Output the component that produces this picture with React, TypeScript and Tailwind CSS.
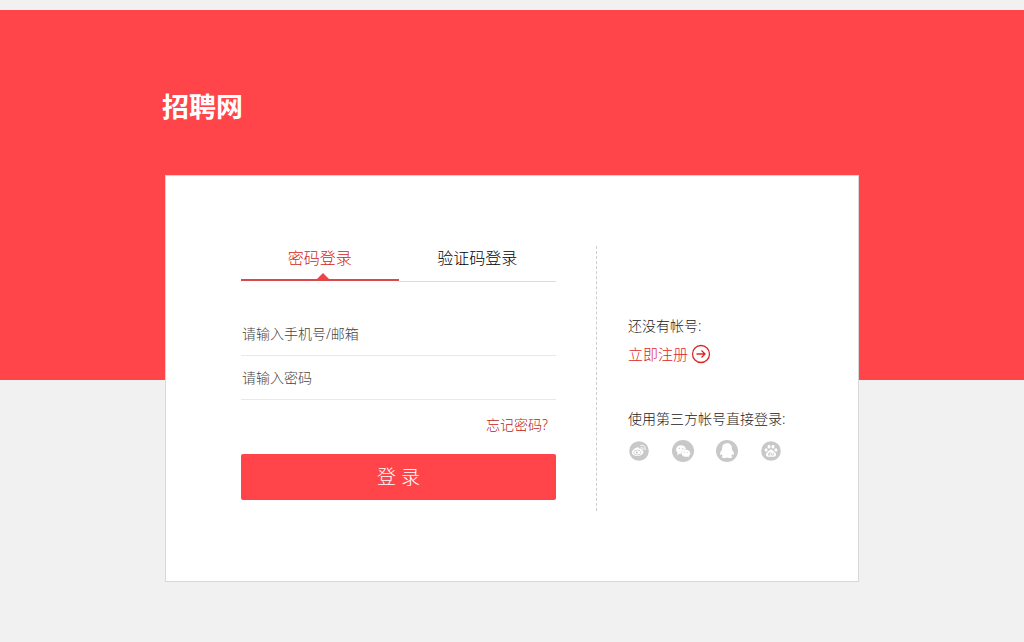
import { useState } from "react";
import type { ReactNode } from "react";

const tabs = ["密码登录", "验证码登录"];

function ArrowCircleIcon() {
  return (
    <svg viewBox="0 0 20 20" className="size-5" fill="none" stroke="currentColor" strokeWidth="1.3" aria-hidden="true">
      <circle cx="10" cy="10" r="8.5" />
      <path d="M5.5 10h8.5M10.5 6.5l3.5 3.5-3.5 3.5" />
    </svg>
  );
}

function WeiboIcon() {
  return (
    <svg viewBox="0 0 22 22" className="size-[22px]" aria-hidden="true">
      <circle cx="11" cy="11" r="9.8" fill="#c8c8c8" />
      <path
        fill="#fff"
        d="M9.2 7.4c1.300-.5 2 .2 1.700 1.400 1.600-.6 3.200-.5 2.900 1.200 1.400.5 2 1.600 1.400 3-.9 2-3.400 3-6 3-3 0-5.300-1.500-5.300-3.700 0-2 2.600-4.200 5.300-4.900z"
      />
      <ellipse cx="9.300" cy="12.500" rx="3.500" ry="2.400" fill="none" stroke="#c8c8c8" strokeWidth=".8" />
      <circle cx="8.900" cy="12.600" r="1" fill="#c8c8c8" />
      <path
        d="M12.800 5.400c2.800-.6 5 1.500 4.300 4.400M13.200 7.500c1.300-.2 2.200.7 1.900 2"
        fill="none"
        stroke="#fff"
        strokeWidth="1"
        strokeLinecap="round"
      />
    </svg>
  );
}

function WechatIcon() {
  return (
    <svg viewBox="0 0 22 22" className="size-[22px]" aria-hidden="true">
      <circle cx="11" cy="11" r="11" fill="#c8c8c8" />
      <g fill="#fff">
        <ellipse cx="9" cy="9.5" rx="5" ry="4.3" />
        <path d="M5.800 12.200l-.7 3 3-1.600z" />
      </g>
      <path
        d="M13.800 9.400c2.600 0 4.600 1.700 4.600 3.800 0 1.200-.6 2.200-1.500 2.900l.4 1.700-2-1c-.5.1-1 .2-1.500.2-2.500 0-4.500-1.700-4.500-3.800s2-3.800 4.500-3.800z"
        fill="#fff"
        stroke="#c8c8c8"
        strokeWidth="0.4"
      />
      <g fill="#c8c8c8">
        <circle cx="7.300" cy="8.400" r=".6" />
        <circle cx="10.700" cy="8.400" r=".6" />
        <circle cx="12.300" cy="12.300" r=".5" />
        <circle cx="15.300" cy="12.300" r=".5" />
      </g>
    </svg>
  );
}

function QqIcon() {
  return (
    <svg viewBox="0 0 22 22" className="size-[22px]" aria-hidden="true">
      <circle cx="11" cy="11" r="11" fill="#c8c8c8" />
      <path
        fill="#fff"
        d="M11 3.200c-2.900 0-4.900 2-4.900 4.800v1.600c-1.300 1.600-2.200 3.400-2 4.900.1.700.8.400 1.500-.6.200.8.600 1.500 1.200 2-.8.400-1.200.9-1 1.400.4 1 3.600 1 5.200.1 1.600.9 4.800.9 5.200-.1.200-.5-.2-1-1-1.400.6-.5 1-1.200 1.200-2 .7 1 1.400 1.300 1.500.6.200-1.500-.7-3.300-2-4.900v-1.600c0-2.800-2-4.800-4.900-4.800z"
      />
    </svg>
  );
}

function BaiduIcon() {
  return (
    <svg viewBox="0 0 22 22" className="size-[22px]" aria-hidden="true">
      <circle cx="11" cy="11" r="9.800" fill="#c8c8c8" />
      <g fill="#fff">
        <ellipse cx="6.100" cy="10" rx="1.500" ry="1.800" />
        <ellipse cx="9" cy="6.700" rx="1.500" ry="1.900" />
        <ellipse cx="13" cy="6.700" rx="1.500" ry="1.900" />
        <ellipse cx="15.900" cy="10" rx="1.500" ry="1.800" />
        <path d="M11 9.400c1.700 0 2.400 1.600 3.400 2.600 1 .9 1.900 1.700 1.600 3-.3 1.600-1.600 1.700-2.800 1.700H8.800c-1.200 0-2.500-.1-2.800-1.700-.3-1.300.6-2.100 1.600-3 1-1 1.700-2.600 3.400-2.600z" />
      </g>
      <path d="M9.900 11.800v3.400H8.500v-1.700h1.400M11.700 12.800v2.400h1.600v-2.400" fill="none" stroke="#c8c8c8" strokeWidth=".8" />
    </svg>
  );
}

const providers: { name: string; icon: ReactNode }[] = [
  { name: "微博", icon: <WeiboIcon /> },
  { name: "微信", icon: <WechatIcon /> },
  { name: "QQ", icon: <QqIcon /> },
  { name: "百度", icon: <BaiduIcon /> },
];

export default function App() {
  const [active, setActive] = useState(0);

  return (
    <div className="min-h-screen bg-[#f1f1f1] pt-2.5 pb-15 font-['Noto_Sans','Noto_Sans_CJK_SC',sans-serif] text-sm font-light text-[#222]">
      <header className="h-[370px] bg-[#ff444a]">
        <div className="mx-auto w-full max-w-[700px] pt-20">
          <h1 className="text-[27px] leading-[34px] font-bold text-white">招聘网</h1>
        </div>
      </header>

      <main className="mx-auto -mt-[205px] flex w-full max-w-[694px] border border-[#d8d8d8] bg-white py-[70px] pl-[75px]">
        <section className="mr-10 w-[315px] pb-[11px]">
          <div className="flex h-9" role="tablist">
            {tabs.map((tab, i) => (
              <button
                key={tab}
                type="button"
                role="tab"
                aria-selected={active === i}
                onClick={() => setActive(i)}
                className={
                  active === i
                    ? "relative mb-px flex-1 border-b-2 border-[#d9484c] pb-2.5 text-base leading-6 text-[#d01c20]"
                    : "relative flex-1 border-b border-[#ddd] pb-3 text-base leading-6 text-black"
                }
              >
                {tab}
                {active === i && (
                  <svg viewBox="0 0 12 6" className="absolute bottom-0 left-[76px] h-1.5 w-3" aria-hidden="true">
                    <path d="M0 6l6-6 6 6z" fill="#ee4347" />
                  </svg>
                )}
              </button>
            ))}
          </div>

          <form className="mt-[30px] flex flex-col" onSubmit={(e) => e.preventDefault()}>
            <input
              type="text"
              aria-label="手机号/邮箱"
              placeholder="请输入手机号/邮箱"
              className="h-11 border-b border-[#e8e8e8] px-px text-sm outline-none placeholder:text-[#444]"
            />
            <input
              type="password"
              aria-label="密码"
              placeholder="请输入密码"
              className="h-11 border-b border-[#e8e8e8] px-px text-sm outline-none placeholder:text-[#444]"
            />
            <a href="#forgot" className="mt-[13px] mr-2 self-end leading-6 text-[#b81c20]">
              忘记密码?
            </a>
            <button type="submit" className="mt-[17px] h-[46px] rounded-xs bg-[#ff444a] pt-0.5 text-[19px] text-white">
              登 录
            </button>
          </form>
        </section>

        <aside className="flex-1 border-l border-dashed border-[#ccc] pt-[68px] pl-[31px]">
          <p className="leading-6">还没有帐号:</p>
          <a href="#register" className="mt-1 flex items-center gap-[3px] text-[15px] leading-6 text-[#dc2428]">
            立即注册
            <ArrowCircleIcon />
          </a>
          <p className="mt-[41px] leading-6">使用第三方帐号直接登录:</p>
          <ul className="mt-[9px] flex gap-[22px]">
            {providers.map(({ name, icon }) => (
              <li key={name}>
                <a href="#oauth" aria-label={name} className="block">
                  {icon}
                </a>
              </li>
            ))}
          </ul>
        </aside>
      </main>
    </div>
  );
}
